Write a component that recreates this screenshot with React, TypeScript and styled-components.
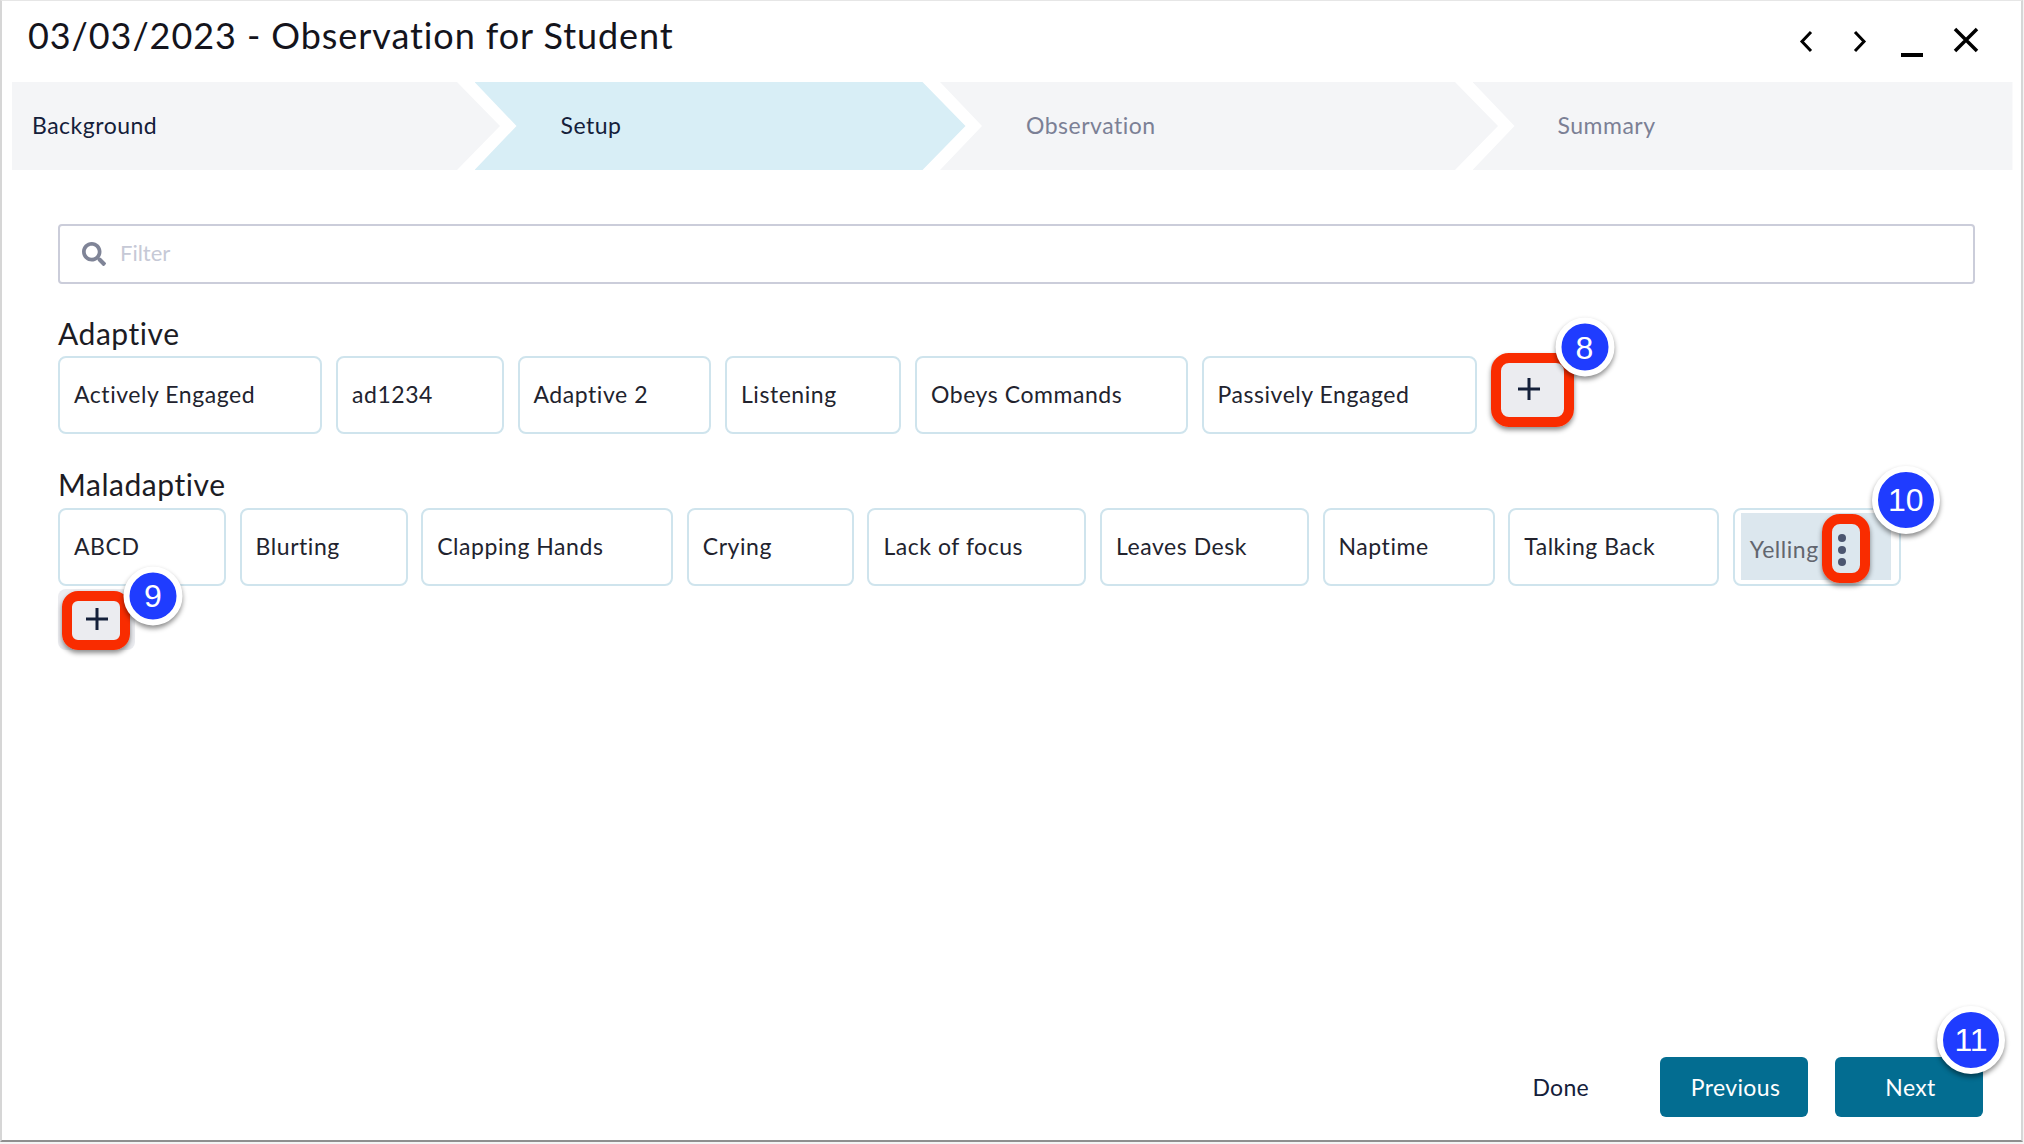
import React from "react";
import styled, { createGlobalStyle } from "styled-components";
import { FaSearch } from "react-icons/fa";

const Global = createGlobalStyle`
  html, body { margin: 0; padding: 0; background: #fff; }
  body { font-family: "Lato", "Open Sans", sans-serif; }
  * { box-sizing: border-box; }
`;

const Page = styled.div`
  width: 2024px;
  height: 1144px;
  overflow: hidden;
  background: #f4f4f4;
`;

const Window = styled.div`
  width: 2023px;
  height: 1142px;
  background: #fff;
  border: 1px solid #d6d6d6;
  border-top-color: #e6e6e6;
  border-left-width: 2px;
  border-right-width: 2px;
  border-bottom: 2px solid #8f8f8f;
  display: flex;
  flex-direction: column;
`;

const Header = styled.header`
  height: 81px;
  display: flex;
  justify-content: space-between;
  padding: 0 42px 0 26px;
  flex: none;
`;

const Title = styled.h1`
  margin: 12px 0 0;
  font-size: 36px;
  line-height: 44px;
  font-weight: 400;
  color: #14141c;
  letter-spacing: 0.92px;
  white-space: nowrap;
`;

const HeaderIcons = styled.div`
  display: flex;
  align-items: flex-start;
  margin-top: 26px;
`;

const HeaderIcon = styled.svg<{ $gap: number }>`
  display: block;
  margin-left: ${(p) => p.$gap}px;
  fill: none;
  stroke: #000;
  stroke-linecap: butt;
`;

const Stepper = styled.nav`
  display: flex;
  flex: none;
  height: 88px;
  margin: 0 9px 0 10px;
`;

const Step = styled.div<{ $w: number; $first?: boolean; $active?: boolean; $done?: boolean }>`
  flex: none;
  width: ${(p) => p.$w}px;
  margin-left: ${(p) => (p.$first ? 0 : -25.5)}px;
  padding: 0 0 2px ${(p) => (p.$first ? 20 : 86)}px;
  display: flex;
  align-items: center;
  font-size: 23px;
  letter-spacing: 0.5px;
  background: ${(p) => (p.$active ? "#d8eef6" : "#f4f5f7")};
  color: ${(p) => (p.$active || p.$done ? "#14203a" : "#7b8095")};
  clip-path: ${(p) =>
    p.$first
      ? "polygon(0 0, calc(100% - 43px) 0, 100% 50%, calc(100% - 43px) 100%, 0 100%)"
      : "polygon(0 0, calc(100% - 43px) 0, 100% 50%, calc(100% - 43px) 100%, 0 100%, 42px 50%)"};
`;

const LastStep = styled(Step)`
  padding-left: 85px;
  clip-path: polygon(0 0, 100% 0, 100% 100%, 0 100%, 42px 50%);
`;

const Content = styled.main`
  flex: 1;
  padding: 54px 46px 0 56px;
`;

const FilterBox = styled.label`
  height: 60px;
  display: flex;
  align-items: center;
  gap: 14px;
  padding-left: 22px;
  border: 2px solid #cbcdda;
  border-radius: 4px;
  color: #7f8497;
  font-size: 24px;
`;

const FilterInput = styled.input`
  flex: 1;
  border: 0;
  outline: 0;
  padding: 0 0 4px;
  font: 400 22px "Lato", sans-serif;
  color: #14203a;
  &::placeholder { color: #c6c9d6; opacity: 1; }
`;

const SectionTitle = styled.h2<{ $top: number; $bottom: number }>`
  margin: ${(p) => p.$top}px 0 ${(p) => p.$bottom}px;
  font-size: 30px;
  line-height: 36px;
  font-weight: 400;
  letter-spacing: 0.55px;
  color: #1c1c24;
`;

const ChipRow = styled.div<{ $gap: number }>`
  display: flex;
  flex-wrap: wrap;
  align-items: flex-start;
  gap: 3px ${(p) => p.$gap}px;
`;

const Chip = styled.div<{ $w: number }>`
  width: ${(p) => p.$w}px;
  height: 78px;
  position: relative;
  display: flex;
  align-items: center;
  padding: 0 0 2px 14px;
  border: 2px solid #cfe4ed;
  border-radius: 8px;
  background: #fff;
  font-size: 23px;
  letter-spacing: 0.55px;
  color: #22232e;
  white-space: nowrap;
`;

const HoverChip = styled(Chip)`
  padding: 3px 8px 4px 6px;
  align-items: stretch;
`;

const HoverBody = styled.div`
  flex: 1;
  display: flex;
  align-items: flex-end;
  justify-content: space-between;
  padding: 0 21px 0 9px;
  background: #dce7ee;
  color: #62666f;
`;

const HoverLabel = styled.span`
  padding-bottom: 17px;
`;

const Kebab = styled.div`
  position: relative;
  width: 48px;
  height: 69px;
  margin-bottom: -3px;
  flex: none;
  display: flex;
  flex-direction: column;
  align-items: center;
  justify-content: center;
  gap: 4px;
  padding: 3px 7px 0 0;
`;

const Dot = styled.span`
  width: 8px;
  height: 8px;
  border-radius: 50%;
  background: #4c5670;
`;

const PlusButton = styled.button<{ $nudge?: number }>`
  position: relative;
  flex: none;
  width: 77px;
  height: 61px;
  margin-top: ${(p) => p.$nudge ?? 0}px;
  padding: 0;
  border: 0;
  border-radius: 8px;
  background: #ebecf0;
  display: flex;
  align-items: center;
  justify-content: center;
`;

const PlusIcon = styled.svg`
  display: block;
  stroke: #14203a;
  stroke-width: 3;
  fill: none;
`;

const RedRing = styled.span<{ $inset: string; $radius: number }>`
  position: absolute;
  inset: ${(p) => p.$inset};
  border: 10px solid #f92c00;
  border-radius: ${(p) => p.$radius}px;
  box-shadow: 0 3px 5px rgba(0, 0, 0, 0.45);
`;

const Badge = styled.span<{ $size: number; $left: number; $top: number }>`
  position: absolute;
  left: ${(p) => p.$left}px;
  top: ${(p) => p.$top}px;
  width: ${(p) => p.$size}px;
  height: ${(p) => p.$size}px;
  transform: translate(-50%, -50%);
  border-radius: 50%;
  background: #1f3cff;
  border: 6px solid #fff;
  box-shadow: 0 3px 5px rgba(0, 0, 0, 0.45);
  display: flex;
  align-items: center;
  justify-content: center;
  color: #fff;
  font: 400 32px/1 "Liberation Sans", Arial, sans-serif;
  letter-spacing: 0;
  z-index: 2;
`;

const Footer = styled.footer`
  flex: none;
  display: flex;
  justify-content: flex-end;
  align-items: center;
  gap: 27px;
  height: 60px;
  margin: 0 38px 23px 0;
`;

const TextButton = styled.button`
  border: 0;
  background: none;
  padding: 0;
  margin-right: 44px;
  font: 400 23px "Lato", sans-serif;
  letter-spacing: 0.3px;
  color: #14203a;
`;

const PrimaryButton = styled.button`
  position: relative;
  width: 148px;
  height: 60px;
  padding: 0 0 0 3px;
  border: 0;
  border-radius: 6px;
  background: #036d91;
  color: #fff;
  font: 400 23px "Lato", sans-serif;
  letter-spacing: 0.35px;
`;

const App = () => (
  <Page>
    <Global />
    <Window>
      <Header>
        <Title>03/03/2023 - Observation for Student</Title>
        <HeaderIcons>
          <HeaderIcon width="14" height="26" viewBox="0 0 14 26" strokeWidth="3" $gap={0}>
            <path d="M12 5 L3 14.5 L12 24" />
          </HeaderIcon>
          <HeaderIcon width="14" height="26" viewBox="0 0 14 26" strokeWidth="3" $gap={40}>
            <path d="M2 5 L11 14.5 L2 24" />
          </HeaderIcon>
          <HeaderIcon width="24" height="30" viewBox="0 0 24 30" strokeWidth="5" $gap={33.5}>
            <path d="M1 28.5 H23" />
          </HeaderIcon>
          <HeaderIcon width="26" height="26" viewBox="0 0 26 26" strokeWidth="3.5" $gap={29}>
            <path d="M2 2 L24 24 M24 2 L2 24" />
          </HeaderIcon>
        </HeaderIcons>
      </Header>
      <Stepper>
        <Step $first $done $w={488}>Background</Step>
        <Step $active $w={491}>Setup</Step>
        <Step $w={558}>Observation</Step>
        <LastStep $w={540}>Summary</LastStep>
      </Stepper>
      <Content>
        <FilterBox>
          <FaSearch />
          <FilterInput placeholder="Filter" />
        </FilterBox>
        <SectionTitle $top={31} $bottom={5}>Adaptive</SectionTitle>
        <ChipRow $gap={14}>
          <Chip $w={264}>Actively Engaged</Chip>
          <Chip $w={167.5}>ad1234</Chip>
          <Chip $w={193.5}>Adaptive 2</Chip>
          <Chip $w={176}>Listening</Chip>
          <Chip $w={272.5}>Obeys Commands</Chip>
          <Chip $w={275}>Passively Engaged</Chip>
          <PlusButton $nudge={2}>
            <PlusIcon width="22" height="22" viewBox="0 0 22 22"><path d="M11 0 V22 M0 11 H22" /></PlusIcon>
            <RedRing $inset="-5px -6px -8px 0" $radius={18} />
            <Badge $size={59} $left={94} $top={-11}>8</Badge>
          </PlusButton>
        </ChipRow>
        <SectionTitle $top={31.5} $bottom={6}>Maladaptive</SectionTitle>
        <ChipRow $gap={13.6}>
          <Chip $w={168}>ABCD</Chip>
          <Chip $w={168}>Blurting</Chip>
          <Chip $w={252}>Clapping Hands</Chip>
          <Chip $w={167}>Crying</Chip>
          <Chip $w={219}>Lack of focus</Chip>
          <Chip $w={209}>Leaves Desk</Chip>
          <Chip $w={172}>Naptime</Chip>
          <Chip $w={211}>Talking Back</Chip>
          <HoverChip $w={168}>
            <HoverBody>
              <HoverLabel>Yelling</HoverLabel>
              <Kebab>
                <Dot />
                <Dot />
                <Dot />
                <RedRing $inset="0" $radius={18} />
              </Kebab>
            </HoverBody>
            <Badge $size={68} $left={171} $top={-10}>10</Badge>
          </HoverChip>
          <PlusButton>
            <PlusIcon width="22" height="22" viewBox="0 0 22 22"><path d="M11 0 V22 M0 11 H22" /></PlusIcon>
            <RedRing $inset="2px 5px 0 4px" $radius={16} />
            <Badge $size={59} $left={95} $top={7}>9</Badge>
          </PlusButton>
        </ChipRow>
      </Content>
      <Footer>
        <TextButton>Done</TextButton>
        <PrimaryButton>Previous</PrimaryButton>
        <PrimaryButton>
          Next
          <Badge $size={68} $left={136} $top={-17}>11</Badge>
        </PrimaryButton>
      </Footer>
    </Window>
  </Page>
);

export default App;
